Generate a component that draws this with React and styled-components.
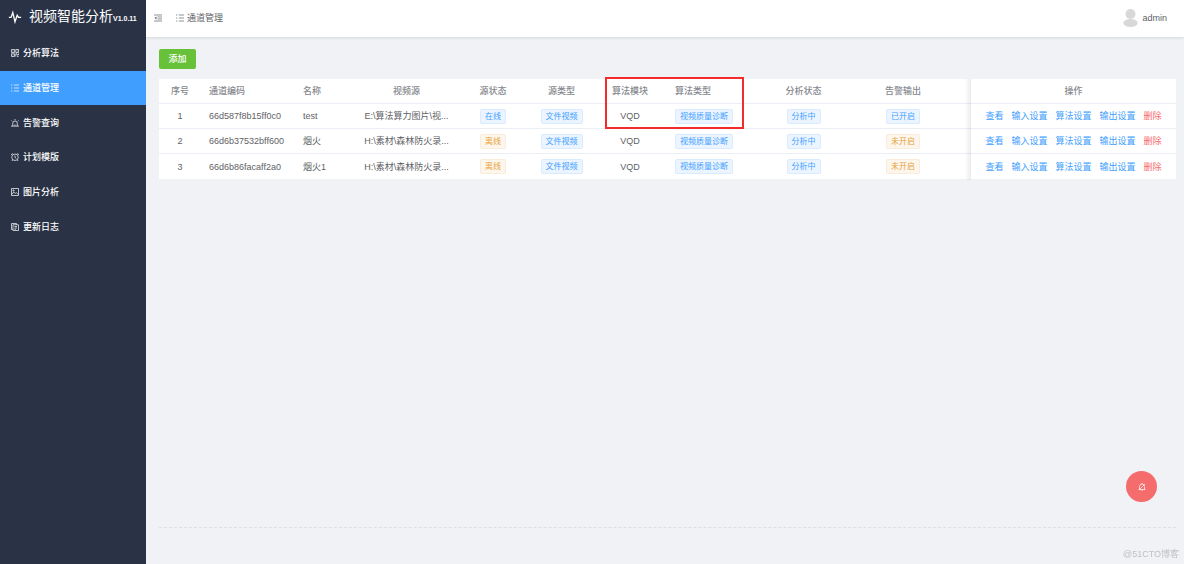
import React from "react";
import styled, { createGlobalStyle, css } from "styled-components";

const GlobalStyle = createGlobalStyle`
  *, *::before, *::after { box-sizing: border-box; }
  html, body, #root { height: 100%; }
  body {
    margin: 0;
    background: #f0f2f5;
    color: #606266;
    font: 9px/12px "Liberation Sans", "Noto Sans CJK SC", sans-serif;
  }
  button { font: inherit; border: 0; padding: 0; cursor: pointer; }
  a { text-decoration: none; }
`;

const Layout = styled.div`
  display: flex;
  min-height: 100%;
`;

const Sidebar = styled.aside`
  flex: 0 0 146px;
  background: #2a3346;
  color: #fff;
`;

const Brand = styled.div`
  display: flex;
  align-items: center;
  height: 36px;
  padding: 0 0 2px 8px;
  white-space: nowrap;
`;

const BrandName = styled.h1`
  margin: 0 0 0 7px;
  font-size: 14px;
  line-height: 20px;
  font-weight: 400;
`;

const Version = styled.small`
  font-size: 7px;
  font-weight: 700;
`;

const Menu = styled.nav`
  display: flex;
  flex-direction: column;
  height: 208px;
`;

const MenuItem = styled.a`
  flex: 1;
  display: flex;
  align-items: center;
  gap: 4px;
  padding-left: 11px;
  color: #fff;
  font-weight: 500;
  background: ${(p) => (p.$active ? "#409eff" : "transparent")};
`;

const Icon = styled.svg.attrs({ viewBox: "0 0 16 16", "aria-hidden": true })`
  width: ${(p) => p.$size || 8}px;
  height: ${(p) => p.$size || 8}px;
  flex: none;
  fill: none;
  stroke: currentColor;
  stroke-width: ${(p) => p.$stroke || 1.4};
`;

const Main = styled.div`
  flex: 1;
  min-width: 0;
  display: flex;
  flex-direction: column;
`;

const Header = styled.header`
  display: flex;
  align-items: center;
  height: 37px;
  padding: 0 17px 1px 8px;
  background: #fff;
  box-shadow: 0 1px 3px rgba(0, 21, 41, 0.12);
`;

const Toggle = styled.button`
  display: flex;
  background: none;
  color: #606266;
`;

const Crumb = styled.div`
  display: flex;
  align-items: center;
  gap: 3px;
  margin-left: 14px;
`;

const User = styled.div`
  display: flex;
  align-items: center;
  gap: 4px;
  margin-left: auto;
`;

const Avatar = styled.svg`
  width: 15px;
  height: 18px;
  fill: #d8d8d8;
`;

const Content = styled.main`
  flex: 1;
  display: flex;
  flex-direction: column;
  padding: 12px 8px 36px 13px;
`;

const AddButton = styled.button`
  align-self: flex-start;
  width: 37px;
  height: 20px;
  margin-bottom: 10px;
  border-radius: 2px;
  background: #67c23a;
  color: #fff;
  font-weight: 500;
`;

const Table = styled.table`
  width: 100%;
  table-layout: fixed;
  border-collapse: separate;
  border-spacing: 0;
  background: #fff;
`;

const cell = css`
  position: relative;
  height: 25px;
  padding: 0 ${(p) => (p.$left ? 8 : 4)}px;
  text-align: ${(p) => (p.$left ? "left" : "center")};
  border-bottom: 1px solid #ebeef5;
  white-space: nowrap;
  ${(p) =>
    p.$fixed &&
    css`
      &::before {
        content: "";
        position: absolute;
        top: 0;
        bottom: -1px;
        left: -6px;
        width: 6px;
        background: linear-gradient(to right, rgba(0, 0, 0, 0), rgba(0, 0, 0, 0.08));
      }
    `}
`;

const Th = styled.th`
  ${cell}
  color: #85888e;
  font-weight: 500;
`;

const Td = styled.td`
  ${cell}
  tr:last-child > & { border-bottom: 0; }
`;

const Row = styled.tr`
  height: 25px;
`;

const Highlight = styled.span`
  position: absolute;
  z-index: 1;
  top: -2px;
  left: 12px;
  width: 139px;
  height: 52px;
  border: 2px solid #f32b2b;
  pointer-events: none;
`;

const tones = {
  info: ["#ecf5ff", "#d9ecff", "#409eff"],
  warn: ["#fdf6ec", "#faecd8", "#e6a23c"],
};

const Tag = styled.span`
  display: inline-block;
  height: 15px;
  padding: 0 4px;
  border: 1px solid ${(p) => tones[p.$tone][1]};
  border-radius: 2px;
  background: ${(p) => tones[p.$tone][0]};
  color: ${(p) => tones[p.$tone][2]};
  font-size: 8px;
  line-height: 13px;
  vertical-align: middle;
`;

const Actions = styled.div`
  display: flex;
  justify-content: center;
  gap: 8px;
`;

const Action = styled.button`
  background: none;
  color: ${(p) => (p.$danger ? "#f56c6c" : "#409eff")};
`;

const Footer = styled.footer`
  margin-top: auto;
  border-top: 1px dashed #dcdfe6;
`;

const AlarmButton = styled.button`
  position: fixed;
  right: 27px;
  bottom: 62px;
  display: flex;
  align-items: center;
  justify-content: center;
  width: 31px;
  height: 31px;
  border-radius: 50%;
  background: #f56c6c;
  color: #fff;
`;

const Watermark = styled.div`
  position: fixed;
  right: 5px;
  bottom: 4px;
  color: #bfc1c5;
`;

const ListIcon = (props) => (
  <Icon {...props}>
    <path d="M5.5 2H16M5.5 8H16M5.5 14H16M0 2h2.5M0 8h2.5M0 14h2.5" />
  </Icon>
);

const menu = [
  ["分析算法", <Icon key="i"><path d="M1 1h6v6H1zM9.5 1H15v6H9.5zM1 9.5h6V15H1zM9.5 15V9.5H12V12h3V9M12 15h3M3 4h2M3 12h2M11.5 4h2" /></Icon>],
  ["通道管理", <ListIcon key="i" />],
  ["告警查询", <Icon key="i"><path d="M3.5 14V8.500a4.500 4.500 0 0 1 9 0V14M0 14.300h16M8 0v2.500M1 3l1.500 1.500M15 3l-1.500 1.500M8 11v3" /></Icon>],
  ["计划模版", <Icon key="i"><circle cx="8" cy="8.500" r="6.500" /><path d="M8 5v4l2.500 1.500M0 4L3.500 0.500M16 4l-3.500-3.500M3.500 13.500L2 16M12.500 13.500L14 16" /></Icon>],
  ["图片分析", <Icon key="i"><path d="M1 1h14v14H1zM1.500 13l4-5 3 3 2-2 4 4" /><circle cx="5" cy="5" r="1.300" /></Icon>],
  ["更新日志", <Icon key="i"><path d="M11 3.500V1H1v12h3M4 3.500h11V15H4zM7 7h5M7 10h5M7 12.500h3" /></Icon>],
];

const columns = [
  ["序号", 42],
  ["通道编码", 94, true],
  ["名称", 62, true],
  ["视频源", 99],
  ["源状态", 74],
  ["源类型", 63],
  ["算法模块", 74],
  ["算法类型", undefined, true],
  ["分析状态", 63],
  ["告警输出", 136],
  ["操作", 205],
];

const rows = [
  { id: "66d587f8b15ff0c0", name: "test", src: "E:\\算法算力图片\\视...", online: true, output: true },
  { id: "66d6b37532bff600", name: "烟火", src: "H:\\素材\\森林防火录...", online: false, output: false },
  { id: "66d6b86facaff2a0", name: "烟火1", src: "H:\\素材\\森林防火录...", online: false, output: false },
];

export default function App() {
  return (
    <Layout>
      <GlobalStyle />
      <Sidebar>
        <Brand>
          <Icon $size={14} $stroke={1.5}>
            <path d="M1 8.500h2.500L5.500 3l2.500 10.500L10.500 6l1.500 2.500h3" />
          </Icon>
          <BrandName>视频智能分析<Version>V1.0.11</Version></BrandName>
        </Brand>
        <Menu>
          {menu.map(([label, icon]) => (
            <MenuItem key={label} href="#" $active={label === "通道管理"}>
              {icon}
              {label}
            </MenuItem>
          ))}
        </Menu>
      </Sidebar>
      <Main>
        <Header>
          <Toggle aria-label="折叠菜单">
            <Icon>
              <path d="M0 2h16M7 6h9M7 10h9M0 14h16" />
              <path d="M5 5v6L1 8z" fill="currentColor" stroke="none" />
            </Icon>
          </Toggle>
          <Crumb>
            <ListIcon />
            通道管理
          </Crumb>
          <User>
            <Avatar viewBox="0 0 15 18" aria-hidden="true">
              <circle cx="7.500" cy="5" r="5" />
              <ellipse cx="7.500" cy="14" rx="7.200" ry="4" />
            </Avatar>
            admin
          </User>
        </Header>
        <Content>
          <AddButton>添加</AddButton>
          <Table>
            <colgroup>
              {columns.map(([label, width]) => (
                <col key={label} width={width} />
              ))}
            </colgroup>
            <thead>
              <Row>
                {columns.map(([label, , left]) => (
                  <Th key={label} $left={left} $fixed={label === "操作"}>
                    {label}
                    {label === "算法模块" && <Highlight />}
                  </Th>
                ))}
              </Row>
            </thead>
            <tbody>
              {rows.map((r, i) => (
                <Row key={r.id}>
                  <Td>{i + 1}</Td>
                  <Td $left>{r.id}</Td>
                  <Td $left>{r.name}</Td>
                  <Td>{r.src}</Td>
                  <Td><Tag $tone={r.online ? "info" : "warn"}>{r.online ? "在线" : "离线"}</Tag></Td>
                  <Td><Tag $tone="info">文件视频</Tag></Td>
                  <Td>VQD</Td>
                  <Td $left><Tag $tone="info">视频质量诊断</Tag></Td>
                  <Td><Tag $tone="info">分析中</Tag></Td>
                  <Td><Tag $tone={r.output ? "info" : "warn"}>{r.output ? "已开启" : "未开启"}</Tag></Td>
                  <Td $fixed>
                    <Actions>
                      <Action>查看</Action>
                      <Action>输入设置</Action>
                      <Action>算法设置</Action>
                      <Action>输出设置</Action>
                      <Action $danger>删除</Action>
                    </Actions>
                  </Td>
                </Row>
              ))}
            </tbody>
          </Table>
          <Footer />
        </Content>
      </Main>
      <AlarmButton aria-label="关闭告警提示">
        <Icon>
          <path d="M3 13V7a5 5 0 0 1 10 0v6M1 13h14M8 0v2M6.500 15.500h3M2 14L14 2" />
        </Icon>
      </AlarmButton>
      <Watermark>@51CTO博客</Watermark>
    </Layout>
  );
}
